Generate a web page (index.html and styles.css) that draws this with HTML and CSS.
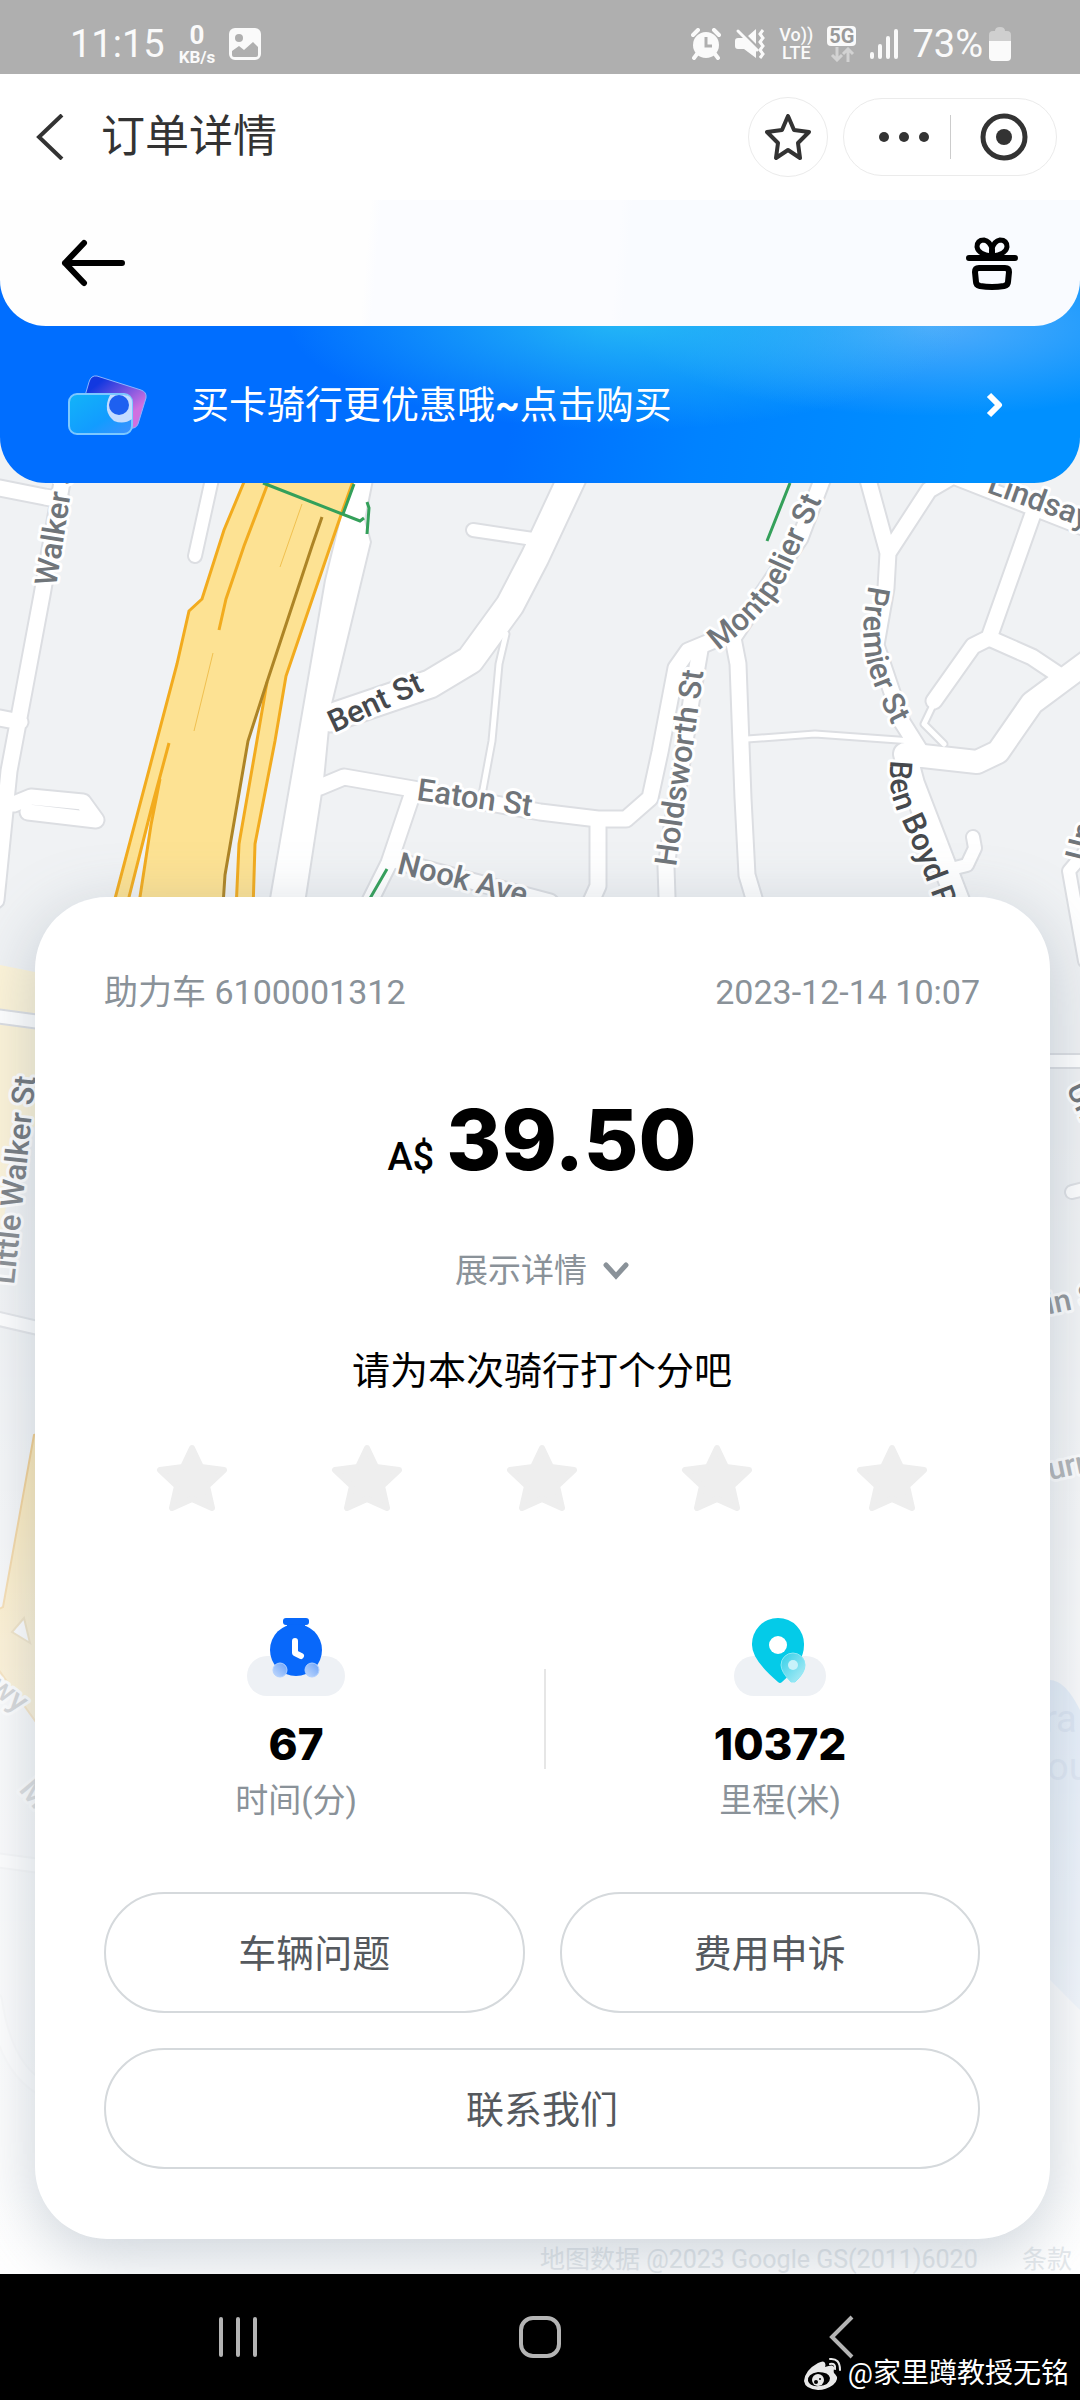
FILE: index.html
```html
<!DOCTYPE html>
<html lang="zh-CN">
<head>
    <meta charset="UTF-8">
    <meta name="viewport" content="width=device-width, initial-scale=1.0">
    <title>订单详情</title>
    <link rel="stylesheet" href="styles.css">
</head>
<body>
    <!-- Status bar -->
    <div class="status-bar">
        <div class="status-group">
            <span class="status-text">11:15</span>
            <span class="net-speed"><b class="net-value">0</b><b class="net-unit">KB/s</b></span>
            <svg class="icon-photo" width="32" height="32" viewBox="0 0 32 32" aria-hidden="true">
                <path fill="#fafafa" fill-rule="evenodd" d="M6 0h20a6 6 0 0 1 6 6v20a6 6 0 0 1-6 6H6a6 6 0 0 1-6-6V6a6 6 0 0 1 6-6zM3 23v4q0 2 2 2h22q2 0 2-2v-8l-5-5-9 8-5-4z"/>
                <circle cx="10" cy="10" r="4" fill="#afafaf"/>
            </svg>
        </div>
        <div class="status-group status-right">
            <svg width="30" height="32" viewBox="0 0 30 32" aria-hidden="true">
                <circle cx="15" cy="17" r="13" fill="#fafafa"/>
                <path d="M2 7l5-5M28 7l-5-5M6 26l-3 4M24 26l3 4" stroke="#fafafa" stroke-width="4" stroke-linecap="round"/>
                <path d="M15 9v9h6" fill="none" stroke="#afafaf" stroke-width="3"/>
            </svg>
            <svg class="icon-mute" width="30" height="32" viewBox="0 0 30 32" aria-hidden="true">
                <path d="M3 10h7l11 10v10L9 21H3q-3 0-3-3v-5q0-3 3-3zM13 8l8-7v15z" fill="#fafafa"/>
                <path d="M3 3l19 19" stroke="#fafafa" stroke-width="3" stroke-linecap="round"/>
                <path d="M28 2l-3 4 3 4-3 4 3 4-3 4 3 4-3 4" fill="none" stroke="#fafafa" stroke-width="3"/>
            </svg>
            <span class="volte"><span>Vo))</span><span>LTE</span></span>
            <span class="five-g">
                <b class="five-g-tag">5G</b>
                <svg width="26" height="15" viewBox="0 0 26 15" aria-hidden="true"><path d="M8 0v13M3 8l5 5 5-5M19 15V2M14 7l5-5 5 5" fill="none" stroke="#d2d2d2" stroke-width="3"/></svg>
            </span>
            <svg width="28" height="32" viewBox="0 0 28 32" aria-hidden="true"><path d="M2 26v3M10 18v11M18 10v19M26 3v26" stroke="#fafafa" stroke-width="4" stroke-linecap="round"/></svg>
            <span class="status-text">73%</span>
            <svg class="icon-battery" width="22" height="34" viewBox="0 0 22 34" aria-hidden="true">
                <path d="M6 4q0-4 5-4t5 4h2q4 0 4 4v6H0V8q0-4 4-4z" fill="#cfcfcf"/>
                <path d="M0 14h22v16q0 4-4 4H4q-4 0-4-4z" fill="#fafafa"/>
            </svg>
        </div>
    </div>

    <!-- Mini program title bar -->
    <header class="title-bar">
        <button class="icon-btn" type="button" aria-label="返回">
            <svg width="28" height="46" viewBox="0 0 28 46" aria-hidden="true"><path d="M26 1L3 23l23 22" fill="none" stroke="#333" stroke-width="4"/></svg>
        </button>
        <h1 class="page-title">订单详情</h1>
        <button class="star-btn" type="button" aria-label="收藏">
            <svg width="46" height="46" viewBox="0 0 46 46" aria-hidden="true"><path d="M23 2l6 14 15 2-11 11 2 15-12-8-12 8 2-15L2 18l15-2z" fill="none" stroke="#333" stroke-width="4" stroke-linejoin="round"/></svg>
        </button>
        <div class="capsule">
            <button class="icon-btn" type="button" aria-label="更多">
                <svg width="50" height="12" viewBox="0 0 50 12" fill="#333" aria-hidden="true"><circle cx="5" cy="6" r="5"/><circle cx="25" cy="6" r="5"/><circle cx="45" cy="6" r="5"/></svg>
            </button>
            <span class="capsule-line"></span>
            <button class="icon-btn" type="button" aria-label="关闭">
                <svg width="48" height="48" viewBox="0 0 48 48" aria-hidden="true"><circle cx="24" cy="24" r="21" fill="none" stroke="#333" stroke-width="5"/><circle cx="24" cy="24" r="8" fill="#333"/></svg>
            </button>
        </div>
    </header>

    <!-- App header -->
    <div class="app-bar">
        <button class="icon-btn" type="button" aria-label="返回上一页">
            <svg width="64" height="48" viewBox="0 0 64 48" aria-hidden="true"><path d="M23 4L4 24l19 20M4 24h57" fill="none" stroke="#000" stroke-width="6" stroke-linecap="round" stroke-linejoin="round"/></svg>
        </button>
        <button class="icon-btn" type="button" aria-label="礼物">
            <svg width="54" height="54" viewBox="0 0 54 54" fill="none" stroke="#000" stroke-width="6" stroke-linecap="round" stroke-linejoin="round" aria-hidden="true">
                <path d="M4 22h46M27 20V14"/>
                <path d="M26 20Q13 18 12 11q0-7 7-7 6 1 8 9zM28 20q13-2 14-9 0-7-7-7-6 1-8 9z" stroke-width="5"/>
                <path d="M14 32h26q4 0 4 4l-1 10q0 3-4 4-12 2-24 0-4-1-4-4l-1-10q0-4 4-4z"/>
            </svg>
        </button>
    </div>

    <a class="banner" href="#">
        <svg class="banner-icon" width="80" height="60" viewBox="0 0 80 60" aria-hidden="true">
            <defs>
                <linearGradient id="cardBack" x1="0" y1="0" x2="1" y2="1"><stop offset="0.2" stop-color="#1238e0"/><stop offset="0.75" stop-color="#d070e0"/></linearGradient>
                <linearGradient id="cardFront" x1="0" y1="0" x2="1" y2="1"><stop offset="0" stop-color="#12b4f8"/><stop offset="0.6" stop-color="#129cff"/><stop offset="1" stop-color="#4090ff"/></linearGradient>
            </defs>
            <path d="M29 1l44 14q6 2 5 8l-8 26q-2 5-8 4L16 38q-3-1-2-7l7-24q2-7 8-6z" fill="url(#cardBack)" stroke="#8cb4ff"/>
            <rect x="1" y="19" width="63" height="40" rx="8" fill="url(#cardFront)" stroke="#7cc8ff" stroke-width="2"/>
            <path d="M42 20h14q8 0 8 8v16q-8 6-18 2-12-10-4-26z" fill="#c4dcff"/>
            <circle cx="51" cy="30" r="10" fill="#1e60f0"/>
        </svg>
        <span class="banner-text">买卡骑行更优惠哦<b>~</b>点击购买</span>
        <svg width="18" height="26" viewBox="0 0 18 26" aria-hidden="true"><path d="M4 3l10 10L4 23" fill="none" stroke="#fff" stroke-width="6" stroke-linejoin="round"/></svg>
    </a>

    <main class="map-area">
        <!-- Street map behind the order card -->
        <svg class="map" viewBox="0 437 1080 1837" preserveAspectRatio="xMidYMin slice" aria-hidden="true">
            <defs>
                <linearGradient id="fade" x1="0" y1="0" x2="0" y2="1">
                    <stop offset="0" stop-color="#fff" stop-opacity="0"/>
                    <stop offset="0.45" stop-color="#fff" stop-opacity="0.7"/>
                    <stop offset="1" stop-color="#fff" stop-opacity="1"/>
                </linearGradient>
                <g id="roads">
                    <path class="r15" d="M70 437L42 595 24 691 9 771-4 900M0 488l45 9 17 3M0 718l20 4M14 804l17-7 52 5 13 18-68-8"/>
                    <path class="r13" d="M214 470l-19 86M473 530l60 9"/>
                    <path class="r27" d="M578 465L535 557l-25 48-40 55-40 24-100 34"/>
                    <path class="r15" d="M320 787l24-10 69 12 127 23 58 7h28l24-21 10-46 16-84 12-17 24-10M411 798l-22 65-20 40M598 821v65l-9 20M400 862l150 40 30 30"/>
                    <path class="r15" d="M700 650L691 702l-25 165 2 60M826 470l-26 68-67 100 5 26 5 134 4 77 12 40"/>
                    <path class="r6" d="M506 634l-7 30-7 77-10 54M747 739l68-5 97 7M934 703l-10 21 20 20"/>
                    <path class="r15" d="M864 465l24 88-2 35-10 57 26 77 17 27M888 553l41-63 24-14 130 51M1034 511l-45 127-16 8-39 55M989 638l43 19 30 20"/>
                    <path class="r22" d="M1090 660l-58 43-34 49-21 10-72-8 8 30 50 130"/>
                    <path class="r13" d="M943 871l24-6 8-17-2-11M1090 846l-21 25 16 90M1040 1061h50M1072 1192l20-5M-5 1016l60 8M-5 1318l60 14M-5 1860l60 8M-5 2000q10 70 50 90"/>
                </g>
            </defs>
            <rect x="0" y="437" width="1080" height="1837" fill="#f0f2f4"/>
            <path d="M0 965l60 12v130l-40 30-20 100z" fill="#fdf4d8"/>
            <path d="M1080 1710q-15-30-30-30v300l30 30z" fill="#a9c8ee"/>
            <use href="#roads" class="road-edge"/>
            <path d="M352 470L325 580 268 910h36l20-130 7-72 40-166-6-22 10-50z" fill="#fff" stroke="#dcdee2" stroke-width="2"/>
            <use href="#roads" class="road-fill"/>

            <!-- Expressway -->
            <path d="M249 470l-25 60-22 69-13 12-12 53-65 246h141l2-66 20-103 11-65 55-161 16-45z" fill="#fde293" stroke="#f2ab1e" stroke-width="3"/>
            <path d="M267 687l-19 54-23 134-3 30h14l3-61 16-92zM151 815l-22 85h10z" fill="#f0f2f4"/>
            <path d="M273 470l-29 76-18 53-7 31M169 743l-18 67-24 95M160 779l-9 46-13 85M267 682l-12 70-16 92-3 66" fill="none" stroke="#f2ab1e" stroke-width="3"/>
            <path d="M302 504l-22 63M213 653l-19 78" stroke="#f0c050"/>
            <path d="M322 517l-10 29-45 136-19 59-23 134-2 30" fill="none" stroke="#ad8426" stroke-width="3"/>
            <path d="M263 483l97 38 4-3M354 484l-11 30M367 502l2 6-2 26M790 483l-23 58M387 869l-22 38" fill="none" stroke="#34a05a" stroke-width="3"/>
            <path d="M34 1435L3 1607l-10 5v50l50 70v-300z" fill="#fbd77c" stroke="#eba834" stroke-width="2"/>
            <path d="M24 1618l-12 14 18 11z" fill="#fff" stroke="#d9b054" stroke-width="2"/>

            <g class="street">
                <path id="montpelier" d="M718 651Q772 610 788 574T832 478" fill="none" stroke="none"/>
                <path id="premier" d="M869 585Q858 635 869 670T912 762" fill="none" stroke="none"/>
                <path id="benBoyd" d="M891 760Q886 790 900 817T945 930" fill="none" stroke="none"/>
                <text transform="translate(56 587) rotate(-81)">Walker St</text>
                <text class="street-main" transform="translate(334 733) rotate(-25)">Bent St</text>
                <text transform="translate(416 800) rotate(8)">Eaton St</text>
                <text transform="translate(396 873) rotate(14)">Nook Ave</text>
                <text transform="translate(676 867) rotate(-82)">Holdsworth St</text>
                <text><textPath href="#montpelier">Montpelier St</textPath></text>
                <text><textPath href="#premier">Premier St</textPath></text>
                <text class="street-main"><textPath href="#benBoyd">Ben Boyd Rd</textPath></text>
                <text transform="translate(986 492) rotate(20)">Lindsay</text>
                <text transform="translate(1086 862) rotate(-76)">Un</text>
                <text transform="translate(14 1285) rotate(-84)">Little Walker St</text>
                <text transform="translate(1066 1088) rotate(65)">Un</text>
                <text transform="translate(1032 1318) rotate(-12)">ain St</text>
                <text transform="translate(1050 1480) rotate(-12)">urr</text>
                <text transform="translate(-12 1690) rotate(38)">wy</text>
                <text transform="translate(18 1790) rotate(50)">M</text>
            </g>
            <g class="water-label">
                <text x="1018" y="1732">Gra</text>
                <text x="1047" y="1780">ou</text>
            </g>
            <rect x="0" y="1120" width="1080" height="1154" fill="url(#fade)"/>
            <g class="map-credit">
                <text x="540" y="2268">地图数据 @2023 Google GS(2011)6020</text>
                <text x="1022" y="2268">条款</text>
            </g>
        </svg>

        <section class="order-card">
            <div class="order-meta">
                <span>助力车 6100001312</span>
                <time datetime="2023-12-14T10:07">2023-12-14 10:07</time>
            </div>

            <p class="price"><span class="currency">A$</span><span class="amount">39.50</span></p>

            <button class="detail-toggle" type="button">
                展示详情
                <svg width="26" height="18" viewBox="0 0 26 18" aria-hidden="true"><path d="M3 3l10 11L23 3" fill="none" stroke="#8a9299" stroke-width="5" stroke-linecap="round"/></svg>
            </button>

            <fieldset class="rating">
                <legend class="rating-title">请为本次骑行打个分吧</legend>
                <div class="stars">
                    <label class="star"><input type="radio" name="score" value="1" aria-label="1星"><svg viewBox="0 0 72 72"><path d="M36 6l9 19 23 3-17 16 5 22-20-9-20 9 5-22L4 28l23-3z"/></svg></label>
                    <label class="star"><input type="radio" name="score" value="2" aria-label="2星"><svg viewBox="0 0 72 72"><path d="M36 6l9 19 23 3-17 16 5 22-20-9-20 9 5-22L4 28l23-3z"/></svg></label>
                    <label class="star"><input type="radio" name="score" value="3" aria-label="3星"><svg viewBox="0 0 72 72"><path d="M36 6l9 19 23 3-17 16 5 22-20-9-20 9 5-22L4 28l23-3z"/></svg></label>
                    <label class="star"><input type="radio" name="score" value="4" aria-label="4星"><svg viewBox="0 0 72 72"><path d="M36 6l9 19 23 3-17 16 5 22-20-9-20 9 5-22L4 28l23-3z"/></svg></label>
                    <label class="star"><input type="radio" name="score" value="5" aria-label="5星"><svg viewBox="0 0 72 72"><path d="M36 6l9 19 23 3-17 16 5 22-20-9-20 9 5-22L4 28l23-3z"/></svg></label>
                </div>
            </fieldset>

            <div class="stats">
                <div class="stat">
                    <svg width="98" height="78" viewBox="0 0 98 78" aria-hidden="true">
                        <defs><linearGradient id="wheel" x1="1" y1="0" x2="0" y2="1"><stop offset="0" stop-color="#6aa2f8"/><stop offset="1" stop-color="#c4dafc"/></linearGradient></defs>
                        <rect y="38" width="98" height="40" rx="20" fill="#eef1f5"/>
                        <rect x="36" width="26" height="7" rx="3" fill="#0868fa"/>
                        <path d="M40 5h18v4H40z" fill="#0868fa"/>
                        <circle cx="49" cy="32" r="26" fill="#0868fa"/>
                        <path d="M48 23v12l6 3" fill="none" stroke="#fff" stroke-width="6" stroke-linecap="round" stroke-linejoin="round"/>
                        <circle cx="33" cy="52" r="7" fill="url(#wheel)" stroke="#b0d0ff"/>
                        <circle cx="65" cy="52" r="7" fill="url(#wheel)" stroke="#b0d0ff"/>
                    </svg>
                    <strong class="stat-value">67</strong>
                    <span class="stat-label">时间(分)</span>
                </div>
                <span class="stat-line"></span>
                <div class="stat">
                    <svg width="92" height="78" viewBox="0 0 92 78" aria-hidden="true">
                        <defs><linearGradient id="pin" x1="0" y1="0" x2="1" y2="1"><stop offset="0" stop-color="#30cfe8"/><stop offset="1" stop-color="#b8edf6"/></linearGradient></defs>
                        <rect y="38" width="92" height="40" rx="20" fill="#eef1f5"/>
                        <path d="M44 0a26 26 0 0 1 26 27q0 18-22 37-2 2-4 0Q18 42 18 27A26 26 0 0 1 44 0z" fill="#04cbe8"/>
                        <circle cx="44" cy="27" r="9" fill="#fff"/>
                        <path d="M59 35a12 12 0 0 1 12 12q0 8-10 17h-4Q47 54 47 47a12 12 0 0 1 12-12z" fill="url(#pin)" stroke="#8be8f6"/>
                        <circle cx="59" cy="47" r="5" fill="#c8f2fa"/>
                    </svg>
                    <strong class="stat-value">10372</strong>
                    <span class="stat-label">里程(米)</span>
                </div>
            </div>

            <div class="actions">
                <button class="action-btn" type="button">车辆问题</button>
                <button class="action-btn" type="button">费用申诉</button>
                <button class="action-btn action-wide" type="button">联系我们</button>
            </div>
        </section>
    </main>

    <!-- System navigation -->
    <nav class="system-nav">
        <button class="nav-btn" type="button" aria-label="最近任务">
            <svg width="40" height="42" viewBox="0 0 40 42" aria-hidden="true"><path d="M3 3v36M20 3v36M37 3v36" stroke="#b4b4b4" stroke-width="4" stroke-linecap="round"/></svg>
        </button>
        <button class="nav-btn" type="button" aria-label="主屏幕">
            <svg width="42" height="42" viewBox="0 0 42 42" aria-hidden="true"><rect x="2" y="2" width="38" height="38" rx="12" fill="none" stroke="#b4b4b4" stroke-width="4"/></svg>
        </button>
        <button class="nav-btn" type="button" aria-label="后退">
            <svg width="26" height="44" viewBox="0 0 26 44" aria-hidden="true"><path d="M23 2L3 22l20 20" fill="none" stroke="#b4b4b4" stroke-width="4"/></svg>
        </button>
        <div class="watermark">
            <svg width="38" height="34" viewBox="0 0 38 34" aria-hidden="true">
                <path fill="#e8e8e8" fill-rule="evenodd" d="M14 6q6-3 7 0 1 2 0 4 10-4 9 2-1 4 1 5 5 5-2 11-7 5-15 5Q1 32 0 24 1 13 14 6zM14 15Q3 17 4 24q2 6 11 5 11-1 11-8-1-6-12-6z"/>
                <circle cx="14" cy="23" r="6" fill="#e8e8e8"/>
                <circle cx="12" cy="25" r="2"/>
                <circle cx="16" cy="22" r="1"/>
                <path d="M26 2q10-1 10 11M26 7q6-1 5 5" fill="none" stroke="#e8e8e8" stroke-width="2" stroke-linecap="round"/>
            </svg>
            <span>@家里蹲教授无铭</span>
        </div>
    </nav>
</body>
</html>
```
FILE: styles.css
```css
* {
    box-sizing: border-box;
}

body {
    margin: 0;
    min-height: 100vh;
    display: flex;
    flex-direction: column;
    background: #fff;
    font-family: Roboto, "Noto Sans CJK SC", sans-serif;
    color: #000;
}

svg {
    display: block;
    flex: none;
}

button {
    padding: 0;
    border: none;
    background: none;
    font-family: inherit;
    cursor: pointer;
}

/* Status bar */
.status-bar {
    display: flex;
    justify-content: space-between;
    align-items: center;
    height: 74px;
    padding: 14px 69px 0 70px;
    background: #afafaf;
    color: #fafafa;
}

.status-group {
    display: flex;
    align-items: center;
    gap: 14px;
}

.status-right {
    gap: 14px;
}

.status-text {
    font-size: 38px;
    line-height: 44px;
}

.net-speed,
.volte,
.five-g {
    display: flex;
    flex-direction: column;
    align-items: center;
}

.net-value {
    font-size: 26px;
    line-height: 26px;
}

.net-unit {
    font-size: 17px;
    line-height: 18px;
}

.volte {
    font-size: 18px;
    font-weight: 500;
    line-height: 18px;
}

.five-g {
    gap: 1px;
}

.five-g-tag {
    padding: 0 2px;
    border-radius: 4px;
    background: #fafafa;
    color: #999;
    font-size: 20px;
    line-height: 20px;
}

.icon-battery {
    margin-left: -8px;
}

/* Title bar */
.title-bar {
    display: flex;
    align-items: center;
    height: 126px;
    padding: 0 23px 0 36px;
    background: #fff;
}

.page-title {
    flex: 1;
    margin: 0 0 0 37px;
    color: #333;
    font-size: 44px;
    font-weight: 400;
    line-height: 60px;
}

.star-btn {
    display: flex;
    align-items: center;
    justify-content: center;
    width: 80px;
    height: 80px;
    margin-right: 15px;
    border: 1px solid #ebebeb;
    border-radius: 50%;
}

.capsule {
    display: flex;
    align-items: center;
    height: 78px;
    padding: 0 28px 0 35px;
    border: 1px solid #ebebeb;
    border-radius: 39px;
}

.capsule-line {
    width: 1px;
    height: 44px;
    margin: 0 29px 0 21px;
    background: #ccc;
}

/* App header */
.app-bar {
    position: relative;
    z-index: 3;
    display: flex;
    justify-content: space-between;
    align-items: center;
    height: 126px;
    padding: 0 61px;
    border-radius: 0 0 46px 46px;
    background: linear-gradient(95deg, #fefefe 34%, #fbfcff 35%, #fbfcff 57%, #f9fbff 58%);
}

/* Card promotion */
.banner {
    position: relative;
    z-index: 2;
    display: flex;
    align-items: center;
    margin-top: -46px;
    padding: 92px 77px 46px 68px;
    height: 203px;
    border-radius: 0 0 46px 46px;
    background:
        radial-gradient(ellipse 340px 110px at 58% 40px, rgba(40, 190, 245, 0.9), rgba(20, 165, 255, 0)),
        radial-gradient(ellipse 300px 90px at 86% 46px, rgba(100, 180, 250, 0.8), rgba(60, 160, 255, 0)),
        linear-gradient(100deg, #006eff 48%, #0082ff 65%, #0090ff 90%);
    color: #fff;
    text-decoration: none;
}

.banner-icon {
    margin-right: 43px;
}

.banner-text {
    flex: 1;
    font-size: 38px;
    line-height: 52px;
}

/* Map */
.map-area {
    position: relative;
    flex: 1;
    margin-top: -46px;
    padding: 460px 30px 35px 35px;
    overflow: hidden;
}

.map {
    position: absolute;
    inset: 0;
    width: 100%;
    height: 100%;
}

.road-edge {
    --edge: 4px;
    fill: none;
    stroke: #dcdee2;
}

.road-fill {
    --edge: 0px;
    fill: none;
    stroke: #fff;
}

.r6,
.r13,
.r15,
.r22,
.r27 {
    stroke-linecap: round;
    stroke-linejoin: round;
}

.r6 { stroke-width: calc(5px + var(--edge)); }
.r13 { stroke-width: calc(12px + var(--edge)); }
.r15 { stroke-width: calc(15px + var(--edge)); }
.r22 { stroke-width: calc(22px + var(--edge)); }
.r27 { stroke-width: calc(27px + var(--edge)); }

.street {
    fill: #70757a;
    stroke: #fff;
    stroke-width: 6px;
    stroke-linejoin: round;
    paint-order: stroke;
    font-size: 31px;
    font-weight: 500;
}

.street-main {
    fill: #46494d;
}

.water-label {
    fill: #7fa3d4;
    font-size: 38px;
}

.map-credit {
    fill: #e4e8eb;
    font-size: 25px;
}

/* Order card */
.order-card {
    position: relative;
    padding: 69px 70px 70px 69px;
    border-radius: 72px;
    background: #fff;
    box-shadow: 0 16px 64px rgba(110, 130, 150, 0.36);
}

.order-meta {
    display: flex;
    justify-content: space-between;
    color: #8a9299;
    font-size: 34px;
    line-height: 52px;
}

.price {
    display: flex;
    justify-content: center;
    align-items: baseline;
    gap: 12px;
    margin: 72px 0 0;
    line-height: 100px;
}

.currency {
    font-size: 38px;
    font-weight: 500;
}

.amount {
    font-family: Inter, sans-serif;
    font-size: 84px;
    font-weight: 800;
}

.detail-toggle {
    display: flex;
    align-items: center;
    gap: 16px;
    margin: 39px auto 0;
    color: #8a9299;
    font-size: 33px;
    line-height: 50px;
}

.rating {
    margin: 50px 0 0;
    padding: 0;
    border: none;
}

.rating-title {
    margin: 0 auto;
    padding: 0;
    font-size: 38px;
    line-height: 50px;
}

.stars {
    display: flex;
    justify-content: space-around;
    margin-top: 46px;
}

.star {
    width: 72px;
    height: 72px;
    cursor: pointer;
}

.star input {
    position: absolute;
    opacity: 0;
}

.star svg {
    fill: #eee;
    stroke: #eee;
    stroke-width: 6px;
    stroke-linejoin: round;
}

/* Ride numbers */
.stats {
    display: grid;
    grid-template-columns: 35fr 2px 33fr;
    margin: 104px -34px 0 -56px;
}

.stat {
    display: flex;
    flex-direction: column;
    align-items: center;
}

.stat-value {
    margin-top: 20px;
    font-family: Inter, sans-serif;
    font-size: 44px;
    font-weight: 800;
    line-height: 56px;
}

.stat-label {
    margin-top: 6px;
    color: #8a9299;
    font-size: 33px;
    line-height: 46px;
}

.stat-line {
    height: 100px;
    margin-top: 51px;
    background: #e6e6e6;
}

/* Buttons */
.actions {
    display: grid;
    grid-template-columns: 1fr 1fr;
    gap: 35px;
    margin-top: 68px;
}

.action-btn {
    height: 121px;
    padding-bottom: 4px;
    border: 2px solid #d5d9dc;
    border-radius: 61px;
    color: #55595e;
    font-size: 38px;
}

.action-wide {
    grid-column: 1 / -1;
}

/* System navigation */
.system-nav {
    position: relative;
    display: flex;
    justify-content: center;
    height: 126px;
    background: #000;
}

.nav-btn {
    display: flex;
    align-items: center;
    justify-content: center;
    width: 28%;
}

.watermark {
    position: absolute;
    right: 11px;
    bottom: 8px;
    display: flex;
    align-items: center;
    gap: 6px;
    color: #fff;
    font-size: 28px;
    line-height: 36px;
}
```
